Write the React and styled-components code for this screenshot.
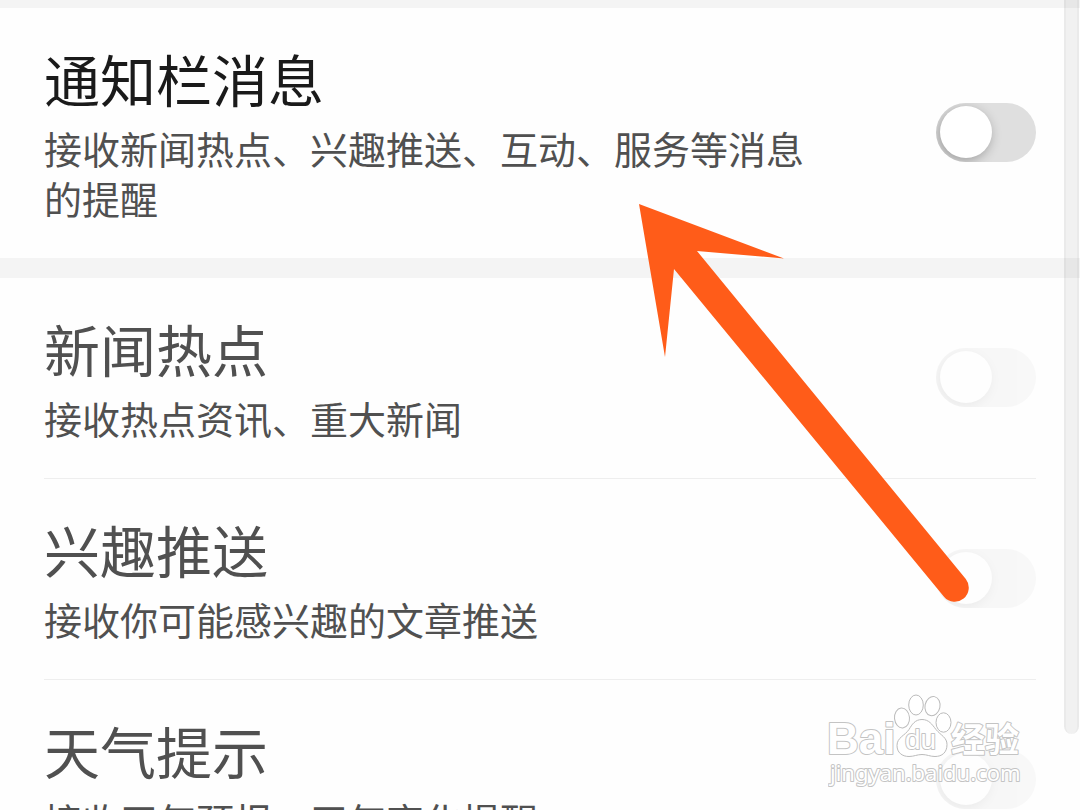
import React, { useState } from "react";
import styled, { createGlobalStyle } from "styled-components";

const GlobalStyle = createGlobalStyle`
  * {
    box-sizing: border-box;
  }

  body {
    margin: 0;
    background: #fefefe;
    font-family: "Noto Sans CJK SC", sans-serif;
  }
`;

const Screen = styled.main`
  position: relative;
  height: 100vh;
  overflow: hidden;
`;

const Section = styled.section`
  border-top: ${(props) => props.$gap}px solid #f4f4f4;
`;

const Row = styled.label`
  display: flex;
  align-items: center;
  justify-content: space-between;
  margin: 0 44px;
  padding: 35px 0;
  color: ${(props) => (props.$dimmed ? "#505050" : "#1a1a1a")};

  & + & {
    border-top: 1px solid #eee;
  }
`;

const RowText = styled.span`
  display: flex;
  flex-direction: column;
  max-width: 770px;
`;

const Title = styled.span`
  font-size: 56px;
  line-height: 70px;
`;

const Description = styled.span`
  margin-top: 10px;
  font-size: 38px;
  line-height: 50px;
  color: #505050;
`;

const Switch = styled.input`
  appearance: none;
  flex: none;
  display: flex;
  align-items: center;
  width: 100px;
  height: 59px;
  margin: 0 0 2px;
  padding: 0 4px;
  overflow: hidden;
  border-radius: 30px;
  background: #dfdfdf;
  opacity: ${(props) => (props.disabled ? 0.2 : 1)};

  &::before {
    content: "";
    width: 52px;
    height: 52px;
    border-radius: 50%;
    background: #fff;
    box-shadow: -2px 3px 12px rgba(0, 0, 0, 0.3);
  }

  &:checked {
    justify-content: flex-end;
    background: #3c76ff;
  }
`;

const ScrollThumb = styled.div`
  position: absolute;
  top: 0;
  right: 1px;
  width: 15px;
  height: 734px;
  border: solid rgba(0, 0, 0, 0.03);
  border-width: 0 2px;
  border-radius: 0 0 8px 8px;
  background: rgba(0, 0, 0, 0.05);
`;

const Pointer = styled.svg`
  position: absolute;
  top: 200px;
  left: 634px;
  pointer-events: none;
`;

const Watermark = styled.svg`
  position: absolute;
  right: 52px;
  bottom: 20px;
  pointer-events: none;
  fill: #fff;
  stroke: #c4c4c4;
  stroke-width: 2px;
  stroke-linejoin: round;

  text {
    paint-order: stroke;
  }
`;

const Paw = styled.g`
  stroke: #bbb;
  stroke-width: 1px;
`;

const topics = [
  { id: "news", title: "新闻热点", text: "接收热点资讯、重大新闻" },
  { id: "interest", title: "兴趣推送", text: "接收你可能感兴趣的文章推送" },
  { id: "weather", title: "天气提示", text: "接收天气预报、天气变化提醒" },
];

function SettingRow({ id, title, text, checked, disabled, onChange }) {
  return (
    <Row htmlFor={id} $dimmed={disabled}>
      <RowText>
        <Title>{title}</Title>
        <Description>{text}</Description>
      </RowText>
      <Switch
        type="checkbox"
        role="switch"
        id={id}
        checked={checked}
        disabled={disabled}
        onChange={onChange}
      />
    </Row>
  );
}

function BaiduMark() {
  return (
    <Watermark width="200" height="100" viewBox="0 0 200 100">
      <text x="-1" y="64" fontFamily="Liberation Sans" fontWeight="700" fontSize="44">
        Bai
      </text>
      <Paw>
        <ellipse cx="74" cy="28" rx="7.5" ry="10" transform="rotate(-5 74 28)" />
        <ellipse cx="88" cy="15" rx="7.3" ry="10" />
        <ellipse cx="104.5" cy="16" rx="7.5" ry="9.7" transform="rotate(12 104 16)" />
        <ellipse cx="115.5" cy="32.5" rx="7.5" ry="9.7" />
        <path d="M94 29.500c-7 0-10 5-13 10-4 6-12 8-12 16 0 7 5 11 12 11 5 0 8-2 13-2s8 2 13 2c7 0 12-4 12-12 0-7-6-9-11-15-4-5-7-10-14-10z" />
      </Paw>
      <text x="77" y="59" fontFamily="Liberation Sans" fontSize="28">
        du
      </text>
      <text x="123" y="62" fontFamily="Noto Sans CJK SC" fontWeight="700" fontSize="34">
        经验
      </text>
      <text x="2" y="91" fontFamily="Noto Sans" fontSize="22">
        jingyan.baidu.com
      </text>
    </Watermark>
  );
}

export default function App() {
  const [enabled, setEnabled] = useState(false);
  const [chosen, setChosen] = useState({});

  return (
    <Screen>
      <GlobalStyle />
      <Section $gap={8}>
        <SettingRow
          id="notifications"
          title="通知栏消息"
          text="接收新闻热点、兴趣推送、互动、服务等消息的提醒"
          checked={enabled}
          onChange={(e) => setEnabled(e.target.checked)}
        />
      </Section>
      <Section $gap={20}>
        {topics.map((topic) => (
          <SettingRow
            key={topic.id}
            {...topic}
            checked={!!chosen[topic.id]}
            disabled={!enabled}
            onChange={(e) =>
              setChosen({ ...chosen, [topic.id]: e.target.checked })
            }
          />
        ))}
      </Section>
      <ScrollThumb />
      <Pointer width="340" height="410" viewBox="634 200 340 410" fill="#ff5c19">
        <path d="M639 204 784 258.500 697 251 965.800 579.100A14 14 0 0 1 944.200 596.900L674 269 665 357z" />
      </Pointer>
      <BaiduMark />
    </Screen>
  );
}
